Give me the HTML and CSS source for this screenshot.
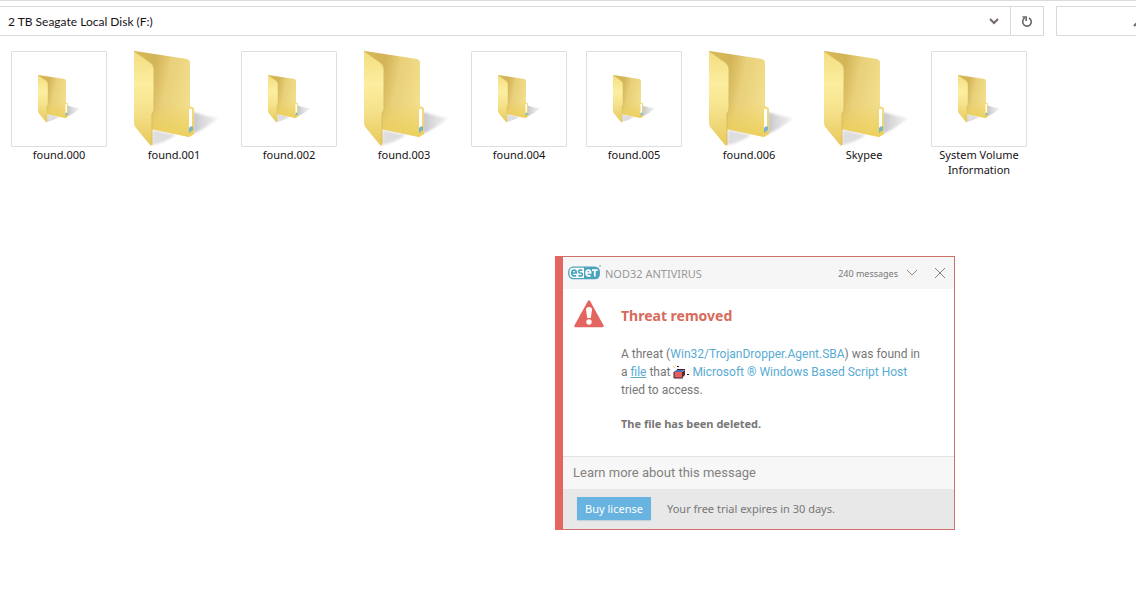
FILE: index.html
```html
<!DOCTYPE html>
<html lang="en">
<head>
<meta charset="utf-8">
<title>2 TB Seagate Local Disk (F:)</title>
<link rel="stylesheet" href="styles.css">
</head>
<body>
<svg class="defs" aria-hidden="true">
  <defs>
    <linearGradient id="front" x1="0" y1="0" x2="0" y2="1">
      <stop offset="0" stop-color="#f3dd80"/><stop offset=".35" stop-color="#fcee9f"/><stop offset=".62" stop-color="#f6e28c"/><stop offset="1" stop-color="#e8c95c"/>
    </linearGradient>
    <linearGradient id="back" x1="0" y1="0" x2="1" y2=".3">
      <stop offset="0" stop-color="#d6b955"/><stop offset=".35" stop-color="#d3b458"/><stop offset=".6" stop-color="#e9d07a"/><stop offset="1" stop-color="#f2de8c"/>
    </linearGradient>
    <linearGradient id="low" x1="0" y1="0" x2="0" y2="1">
      <stop offset=".6" stop-color="#eccf5c" stop-opacity="0"/><stop offset="1" stop-color="#eccf5c"/>
    </linearGradient>
    <linearGradient id="shade" x1="0" y1="0" x2="1" y2="0">
      <stop offset="0" stop-color="#c6c6ca"/><stop offset="1" stop-color="#e8e8ea" stop-opacity=".6"/>
    </linearGradient>
    <filter id="soft" x="-20%" y="-20%" width="140%" height="140%"><feGaussianBlur stdDeviation="1.2"/></filter>
    <symbol id="folder" viewBox="0 0 96 96">
      <path d="M67 61Q79 65 92 67Q82 76 67 83Z" fill="url(#shade)" filter="url(#soft)"/>
      <path d="M27 79L50 84Q38 92 26 94Z" fill="#dedee0" filter="url(#soft)"/>
      <path d="M9 0L61 8Q64 9 64 12V55L68 57V83L63 86L25 78Z" fill="url(#back)"/>
      <path d="M9 0L61 8Q64 9 64 12V55L68 57V83L63 86L25 78Z" fill="url(#low)"/>
      <path d="M63 58L66 58V78L63 80Z" fill="#fff"/>
      <path d="M63 77Q65 74 67 76V79L63 82Z" fill="#79b2cc"/>
      <path d="M8 0L25 12Q28 15 28 18V59L26 63V92Q26 96 24 94L10 77Q8 75 8 72Z" fill="url(#front)"/>
      <path d="M8 0L25 12Q28 15 28 18V59L26 63V94" fill="none" stroke="#d9bc62" stroke-width="1"/>
    </symbol>
  </defs>
</svg>

<header class="toolbar">
  <div class="address">
    <span class="address-text">2 TB Seagate Local Disk (F:)</span>
    <button class="tool history" aria-label="Previous locations">
      <svg width="12" height="8" viewBox="0 0 12 8"><path d="M2 2L6 6L10 2" fill="none" stroke="#75686c" stroke-width="2"/></svg>
    </button>
    <button class="tool refresh" aria-label="Refresh">
      <svg width="12" height="13" viewBox="0 0 12 13"><path d="M8 3A4.3 4.3 0 1 1 3.6 3.2M1.5 2H5.2V6" fill="none" stroke="#6d6668" stroke-width="1.6"/></svg>
    </button>
  </div>
  <div class="search">
    <input class="search-input" type="search" aria-label="Search">
    <svg class="search-icon" width="12" height="14" viewBox="0 0 12 14"><path d="M1 12L6 7" stroke="#6d6668" stroke-width="2"/><circle cx="8" cy="5" r="4" fill="none" stroke="#6d6668" stroke-width="1.5"/></svg>
  </div>
</header>

<main>
  <ul class="files">
    <li class="file"><span class="thumb framed"><svg class="icon-small"><use href="#folder"/></svg></span><span>found.000</span></li>
    <li class="file"><span class="thumb"><svg class="icon-large"><use href="#folder"/></svg></span><span>found.001</span></li>
    <li class="file"><span class="thumb framed"><svg class="icon-small"><use href="#folder"/></svg></span><span>found.002</span></li>
    <li class="file"><span class="thumb"><svg class="icon-large"><use href="#folder"/></svg></span><span>found.003</span></li>
    <li class="file"><span class="thumb framed"><svg class="icon-small"><use href="#folder"/></svg></span><span>found.004</span></li>
    <li class="file"><span class="thumb framed"><svg class="icon-small"><use href="#folder"/></svg></span><span>found.005</span></li>
    <li class="file"><span class="thumb"><svg class="icon-large"><use href="#folder"/></svg></span><span>found.006</span></li>
    <li class="file"><span class="thumb"><svg class="icon-large"><use href="#folder"/></svg></span><span>Skypee</span></li>
    <li class="file"><span class="thumb framed"><svg class="icon-small"><use href="#folder"/></svg></span><span>System Volume Information</span></li>
  </ul>
</main>

<section class="alert" role="alertdialog" aria-labelledby="alert-title">
  <header class="alert-head">
    <svg class="logo" width="33" height="16" viewBox="0 0 33 16" role="img" aria-label="eset">
      <rect x=".8" y="2.2" width="30.4" height="11.4" rx="4.5" fill="#fff" stroke="#4ba3bd" stroke-width="1.3"/>
      <path d="M16 2H27Q31.5 2 31.5 6.5V9.5Q31.5 14 27 14H16Z" fill="#4ba3bd"/>
      <g fill="none" stroke="#4ba3bd" stroke-width="1.7"><path d="M4 8H8.3Q8.3 5.2 6.1 5.2Q3.8 5.2 3.8 8Q3.8 10.8 6.2 10.8H8.2"/><path d="M14.3 5.2H12Q10.6 5.2 10.6 6.6Q10.6 8 12 8H13Q14.4 8 14.4 9.4Q14.4 10.8 13 10.8H10.4"/></g>
      <g fill="none" stroke="#fff" stroke-width="1.7"><path d="M18.3 8H22.6Q22.6 5.2 20.4 5.2Q18.1 5.2 18.1 8Q18.1 10.8 20.5 10.8H22.5"/><path d="M24 5.2H29.6M26.8 5.2V11.6"/></g>
      <circle cx="32" cy="1" r=".8" fill="#4ba3bd"/>
    </svg>
    <span class="product">NOD32 ANTIVIRUS</span>
    <button class="messages">240 messages
      <svg width="12" height="8" viewBox="0 0 12 8"><path d="M1 1L6 6L11 1" fill="none" stroke="#8c8c8c"/></svg>
    </button>
    <button class="close" aria-label="Close">
      <svg width="12" height="12" viewBox="0 0 12 12"><path d="M1 1L11 11M11 1L1 11" stroke="#858585"/></svg>
    </button>
  </header>
  <div class="alert-body">
    <svg class="warning" width="30" height="28" viewBox="0 0 30 28" aria-hidden="true">
      <path d="M15 1.5L28.5 26H1.5Z" fill="#e4655f" stroke="#e4655f" stroke-width="2.5" stroke-linejoin="round"/>
      <path d="M12 9.5Q12 7 15 7Q18 7 18 9.5L16.8 18H13.2Z" fill="#fff"/><circle cx="15" cy="22" r="2.7" fill="#fff"/>
    </svg>
    <div>
      <h1 class="alert-title" id="alert-title">Threat removed</h1>
      <p class="alert-text">A threat (<a href="#threat">Win32/TrojanDropper.Agent.SBA</a>) was found in<br>a <a class="underlined" href="#file">file</a> that <svg class="script-icon" width="16" height="14" viewBox="0 0 16 14" aria-hidden="true"><path d="M1 6H9V13H1Z" fill="#e4605a"/><path d="M2 6L5 4H12L9 7H2Z" fill="#3f78c0"/><path d="M9 7L12 5V10L9 13Z" fill="#5a2632"/><path d="M1 13V7M4 4.5H12M1 13H10" fill="none" stroke="#3a2438"/><path d="M14 9.5H16M4 1.5H6" stroke="#2b1d33"/><path d="M0 1.5H1M2 .5H3M1 2.5H2" stroke="#dfc45c"/></svg> <a href="#app">Microsoft ® Windows Based Script Host</a><br>tried to access.</p>
      <p class="alert-result">The file has been deleted.</p>
    </div>
  </div>
  <a class="learn" href="#learn">Learn more about this message</a>
  <footer class="alert-foot">
    <button class="buy">Buy license</button>
    <span>Your free trial expires in 30 days.</span>
  </footer>
</section>
</body>
</html>
```
FILE: styles.css
```css
* { box-sizing: border-box; }

body {
  margin: 0;
  background: #fff;
  color: #161214;
  font: 11px/15px "Noto Sans", "Open Sans", sans-serif;
  overflow: hidden;
}

button { border: 0; padding: 0; background: none; font: inherit; color: inherit; }
a { color: #58abd3; text-decoration: none; }
svg { flex: none; }

.defs { position: absolute; width: 0; height: 0; }

.toolbar {
  display: flex;
  gap: 12px;
  padding-top: 5px;
  border-top: 1px solid #dcdcdc;
}

.address {
  display: flex;
  flex: 1;
  height: 30px;
  border: 1px solid #d9d9d9;
  border-left: 0;
}

.address-text { flex: 1; padding: 7px 8px; font-family: Lato, sans-serif; font-size: 12px; }

.tool { display: flex; align-items: center; justify-content: center; width: 32px; }
.refresh { border-left: 1px solid #d9d9d9; width: 33px; }

.search {
  display: flex;
  align-items: center;
  width: 92px;
  height: 30px;
  margin-right: -12px;
  border: 1px solid #d9d9d9;
}

.search-input { width: 76px; border: 0; outline: 0; background: none; }

.files {
  display: grid;
  grid-template-columns: repeat(auto-fill, 96px);
  gap: 19px;
  margin: 0;
  padding: 15px 11px;
  list-style: none;
}

.file { display: flex; flex-direction: column; align-items: center; text-align: center; }

.thumb { display: flex; align-items: center; justify-content: center; width: 96px; height: 96px; }
.framed { padding-right: 2px; border: 1px solid #dedede; border-radius: 1px; }
.icon-small { width: 48px; height: 48px; }
.icon-large { width: 96px; height: 96px; }

.alert {
  position: absolute;
  left: 555px;
  top: 256px;
  width: 400px;
  border: 1px solid #d0706a;
  border-left: 8px solid #e4655f;
  background: #fff;
  color: #777;
}

.alert-head {
  display: flex;
  align-items: center;
  height: 32px;
  padding: 0 8px 0 5px;
  background: #f6f6f6;
}

.product { flex: 1; padding-left: 4px; color: #999; }

.messages { display: flex; align-items: center; gap: 8px; font-size: 9px; }
.close { display: flex; margin-left: 16px; }

.alert-body { display: flex; gap: 17px; padding: 11px; }

.alert-title { margin: 6px 0 19px; color: #d9695a; font-size: 14px; line-height: 20px; }

.alert-text { margin: 0; font: 12px/18px Roboto, sans-serif; }
.underlined { text-decoration: underline; }
.script-icon { vertical-align: -3px; }
.alert-result { margin: 16px 0 12px; line-height: 18px; font-weight: bold; }

.learn {
  display: block;
  padding: 7px 10px;
  border-top: 1px solid #e2e2e2;
  background: #f7f7f7;
  color: #85817e;
  font: 13px/18px Roboto, sans-serif;
}

.alert-foot {
  display: flex;
  align-items: center;
  gap: 16px;
  height: 40px;
  padding: 0 14px 2px;
  background: #e8e8e8;
}

.buy { width: 74px; height: 23px; background: #68b3df; color: #fff; box-shadow: 0 1px 1px #c5d2da; }
```
